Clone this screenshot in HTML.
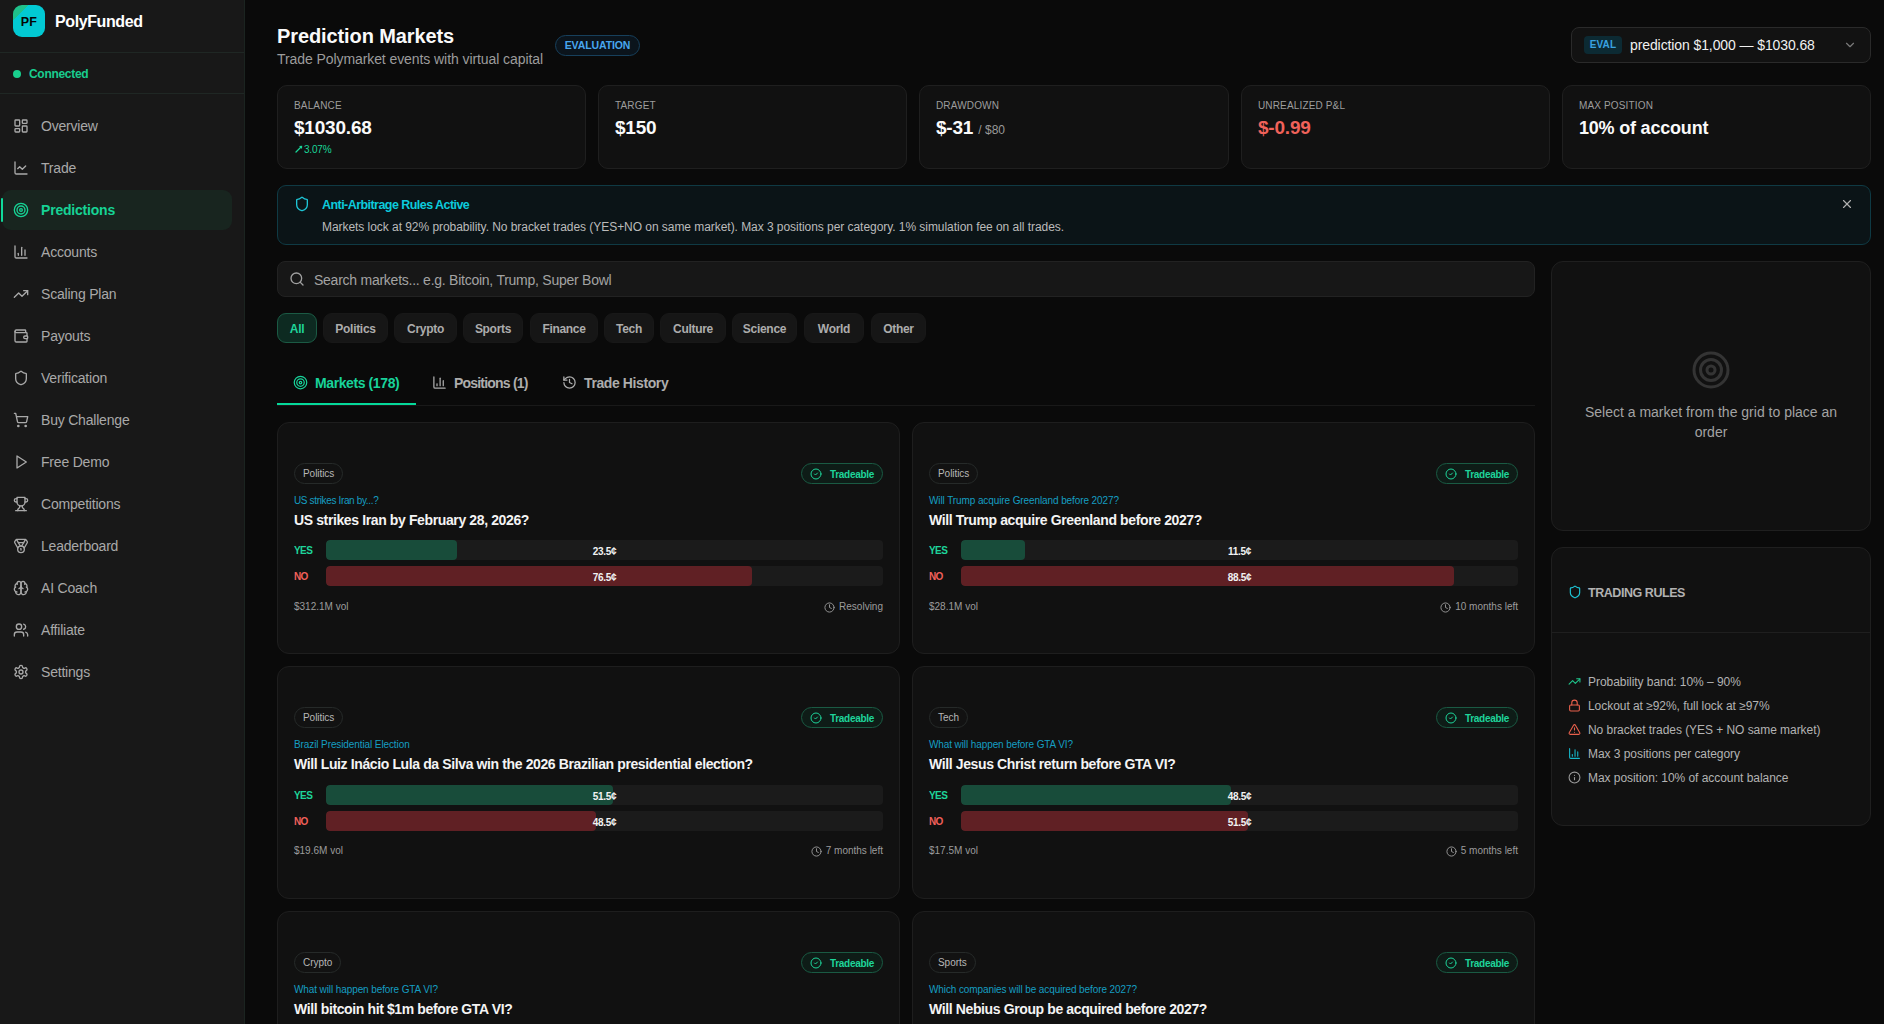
<!DOCTYPE html>
<html><head><meta charset="utf-8">
<style>
*{box-sizing:border-box;margin:0;padding:0}
html,body{width:1884px;height:1024px;overflow:hidden;background:#0a0a0a;font-family:"Liberation Sans",sans-serif;color:#e8e8e8}
.abs{position:absolute}
svg{display:block}
.ic{fill:none;stroke:currentColor;stroke-width:2;stroke-linecap:round;stroke-linejoin:round}
/* sidebar */
#sb{position:absolute;left:0;top:0;width:245px;height:1024px;background:#181818;border-right:1px solid #1b2420}
.logo{left:13px;top:5px;width:32px;height:32px;border-radius:9px;background:linear-gradient(135deg,#1fc08a 0,#1fc08a 24%,#02c9d3 24%,#02c9d3 100%);color:#050505;font-weight:bold;font-size:12.5px;line-height:34px;text-align:center;letter-spacing:0.2px}
.brand{left:55px;top:11px;font-size:16px;font-weight:bold;color:#fff;letter-spacing:-0.4px;line-height:22px}
.hr{left:0;width:244px;height:1px;background:#1f2724}
.nav{position:absolute;left:2px;width:230px;height:40px;color:#a9a9a9;font-size:14px;line-height:40px}
.nav svg{position:absolute;left:11px;top:12px;width:16px;height:16px}
.nav span{position:absolute;left:39px;top:0;letter-spacing:-0.2px}
.nav.act{background:#18251f;border-radius:9px;color:#16d395;font-weight:bold}
.nav.act:before{content:"";position:absolute;left:-1px;top:8px;width:2px;height:24px;background:#10d99a;border-radius:1px}

.card{position:absolute;background:#111111;border:1px solid #1f1f1f;border-radius:10px}
.lbl{position:absolute;font-size:10px;line-height:14px;color:#9d9d9d;letter-spacing:0.15px}
.val{position:absolute;font-size:19px;line-height:24px;font-weight:bold;color:#fafafa;letter-spacing:-0.2px}
.pill{position:absolute;top:313px;height:30px;border-radius:9px;background:#161616;color:#acacac;font-size:12px;font-weight:bold;line-height:30px;text-align:center;letter-spacing:-0.3px;border:1px solid #181818}
.tab{position:absolute;top:373px;height:20px;font-size:14px;line-height:20px;font-weight:bold;color:#adadad;letter-spacing:-0.4px}
.tab svg{position:absolute;left:0;top:2px;width:15px;height:15px}
.tab span{position:absolute;left:22px;top:0;white-space:nowrap}

.mc{position:absolute;width:623px;height:232px;background:#111111;border:1px solid #1e1e1e;border-radius:12px}
.mc .cat{position:absolute;left:16px;top:40px;height:21px;border-radius:11px;border:1px solid #262a29;background:#121212;color:#b7b7b7;font-size:10px;line-height:19px;padding:0 8px;letter-spacing:-0.05px}
.mc .trd{position:absolute;right:16px;top:40px;width:82px;height:21px;border-radius:11px;border:1px solid #1a5a43;background:#0e1c17;color:#1ed49a;font-size:10px;font-weight:bold;line-height:19px;letter-spacing:-0.3px}
.mc .trd svg{position:absolute;left:8px;top:4px;width:12px;height:12px}
.mc .trd span{position:absolute;left:28px;top:1px}
.mc .sub{position:absolute;left:16px;top:71px;font-size:10px;line-height:14px;color:#159ec2;letter-spacing:-0.1px;white-space:nowrap}
.mc .ttl{position:absolute;left:16px;top:87px;font-size:14px;line-height:20px;font-weight:bold;color:#f4f4f4;letter-spacing:-0.38px;white-space:nowrap}
.mc .yl{position:absolute;left:16px;font-size:10px;font-weight:bold;line-height:20px;letter-spacing:-0.6px}
.mc .tr{position:absolute;left:48px;width:557px;height:20px;border-radius:4px;background:#1b1b1b;overflow:hidden}
.mc .fl{position:absolute;left:0;top:0;height:20px;border-radius:4px}
.mc .pv{position:absolute;left:0;top:2px;width:557px;text-align:center;font-size:10px;font-weight:bold;line-height:20px;color:#f2f2f2;letter-spacing:-0.3px}
.mc .ft{position:absolute;top:177px;font-size:10px;line-height:14px;color:#9c9c9c;letter-spacing:0px;white-space:nowrap}
.mc .ft svg{position:absolute;left:0;top:2px;width:11px;height:11px}
.r2 .tr,.r2 .yl{margin-top:1px}
</style></head>
<body>
<div id="sb">
  <div class="abs logo">PF</div>
  <div class="abs brand">PolyFunded</div>
  <div class="abs hr" style="top:52px"></div>
  <div class="abs" style="left:13px;top:70px;width:8px;height:8px;border-radius:50%;background:#19cf8d"></div>
  <div class="abs" style="left:29px;top:66px;font-size:12px;font-weight:bold;color:#18cd8f;line-height:16px;letter-spacing:-0.3px">Connected</div>
  <div class="abs hr" style="top:93px"></div>

  <div class="nav" style="top:106px"><svg class="ic" viewBox="0 0 24 24"><rect width="7" height="9" x="3" y="3" rx="1"/><rect width="7" height="5" x="14" y="3" rx="1"/><rect width="7" height="9" x="14" y="12" rx="1"/><rect width="7" height="5" x="3" y="16" rx="1"/></svg><span>Overview</span></div>
  <div class="nav" style="top:148px"><svg class="ic" viewBox="0 0 24 24"><path d="M3 3v16a2 2 0 0 0 2 2h16"/><path d="m19 9-5 5-4-4-3 3"/></svg><span>Trade</span></div>
  <div class="nav act" style="top:190px"><svg class="ic" viewBox="0 0 24 24"><circle cx="12" cy="12" r="10"/><circle cx="12" cy="12" r="6"/><circle cx="12" cy="12" r="2"/></svg><span>Predictions</span></div>
  <div class="nav" style="top:232px"><svg class="ic" viewBox="0 0 24 24"><path d="M3 3v16a2 2 0 0 0 2 2h16"/><path d="M18 17V9"/><path d="M13 17V5"/><path d="M8 17v-3"/></svg><span>Accounts</span></div>
  <div class="nav" style="top:274px"><svg class="ic" viewBox="0 0 24 24"><polyline points="22 7 13.5 15.5 8.5 10.5 2 17"/><polyline points="16 7 22 7 22 13"/></svg><span>Scaling Plan</span></div>
  <div class="nav" style="top:316px"><svg class="ic" viewBox="0 0 24 24"><path d="M19 7V4a1 1 0 0 0-1-1H5a2 2 0 0 0 0 4h15a1 1 0 0 1 1 1v4h-3a2 2 0 0 0 0 4h3a1 1 0 0 0 1-1v-2a1 1 0 0 0-1-1"/><path d="M3 5v14a2 2 0 0 0 2 2h15a1 1 0 0 0 1-1v-4"/></svg><span>Payouts</span></div>
  <div class="nav" style="top:358px"><svg class="ic" viewBox="0 0 24 24"><path d="M20 13c0 5-3.500 7.500-7.660 8.950a1 1 0 0 1-.67-.01C7.500 20.500 4 18 4 13V6a1 1 0 0 1 1-1c2 0 4.500-1.200 6.240-2.720a1.170 1.170 0 0 1 1.520 0C14.510 3.810 17 5 19 5a1 1 0 0 1 1 1z"/></svg><span>Verification</span></div>
  <div class="nav" style="top:400px"><svg class="ic" viewBox="0 0 24 24"><circle cx="8" cy="21" r="1"/><circle cx="19" cy="21" r="1"/><path d="M2.050 2.050h2l2.660 12.420a2 2 0 0 0 2 1.580h9.780a2 2 0 0 0 1.950-1.570l1.650-7.430H5.120"/></svg><span>Buy Challenge</span></div>
  <div class="nav" style="top:442px"><svg class="ic" viewBox="0 0 24 24"><polygon points="6 3 20 12 6 21 6 3"/></svg><span>Free Demo</span></div>
  <div class="nav" style="top:484px"><svg class="ic" viewBox="0 0 24 24"><path d="M6 9H4.500a2.500 2.500 0 0 1 0-5H6"/><path d="M18 9h1.500a2.500 2.500 0 0 0 0-5H18"/><path d="M4 22h16"/><path d="M10 14.660V17c0 .550-.470.980-.970 1.210C7.850 18.750 7 20.240 7 22"/><path d="M14 14.660V17c0 .550.470.980.970 1.210C16.150 18.750 17 20.240 17 22"/><path d="M18 2H6v7a6 6 0 0 0 12 0V2Z"/></svg><span>Competitions</span></div>
  <div class="nav" style="top:526px"><svg class="ic" viewBox="0 0 24 24"><path d="M7.210 15 2.660 7.140a2 2 0 0 1 .130-2.200L4.400 2.800A2 2 0 0 1 6 2h12a2 2 0 0 1 1.600.800l1.600 2.140a2 2 0 0 1 .140 2.200L16.790 15"/><path d="M11 12 5.120 2.200"/><path d="m13 12 5.880-9.800"/><path d="M8 7h8"/><circle cx="12" cy="17" r="5"/><path d="M12 18v-2h-.5"/></svg><span>Leaderboard</span></div>
  <div class="nav" style="top:568px"><svg class="ic" viewBox="0 0 24 24"><path d="M12 5a3 3 0 1 0-5.997.125 4 4 0 0 0-2.526 5.770 4 4 0 0 0 .556 6.588A4 4 0 1 0 12 18Z"/><path d="M12 5a3 3 0 1 1 5.997.125 4 4 0 0 1 2.526 5.770 4 4 0 0 1-.556 6.588A4 4 0 1 1 12 18Z"/><path d="M15 13a4.500 4.500 0 0 1-3-4 4.500 4.500 0 0 1-3 4"/><path d="M17.599 6.500a3 3 0 0 0 .399-1.375"/><path d="M6.003 5.125A3 3 0 0 0 6.401 6.500"/><path d="M3.477 10.896a4 4 0 0 1 .585-.396"/><path d="M19.938 10.500a4 4 0 0 1 .585.396"/><path d="M6 18a4 4 0 0 1-1.967-.516"/><path d="M19.967 17.484A4 4 0 0 1 18 18"/></svg><span>AI Coach</span></div>
  <div class="nav" style="top:610px"><svg class="ic" viewBox="0 0 24 24"><path d="M16 21v-2a4 4 0 0 0-4-4H6a4 4 0 0 0-4 4v2"/><circle cx="9" cy="7" r="4"/><path d="M22 21v-2a4 4 0 0 0-3-3.870"/><path d="M16 3.130a4 4 0 0 1 0 7.750"/></svg><span>Affiliate</span></div>
  <div class="nav" style="top:652px"><svg class="ic" viewBox="0 0 24 24"><path d="M12.220 2h-.44a2 2 0 0 0-2 2v.180a2 2 0 0 1-1 1.730l-.43.250a2 2 0 0 1-2 0l-.15-.08a2 2 0 0 0-2.730.730l-.22.380a2 2 0 0 0 .730 2.730l.150.100a2 2 0 0 1 1 1.720v.510a2 2 0 0 1-1 1.740l-.15.090a2 2 0 0 0-.730 2.730l.220.380a2 2 0 0 0 2.730.730l.150-.080a2 2 0 0 1 2 0l.430.250a2 2 0 0 1 1 1.730V20a2 2 0 0 0 2 2h.440a2 2 0 0 0 2-2v-.180a2 2 0 0 1 1-1.730l.430-.250a2 2 0 0 1 2 0l.150.080a2 2 0 0 0 2.730-.730l.220-.390a2 2 0 0 0-.730-2.730l-.150-.080a2 2 0 0 1-1-1.740v-.500a2 2 0 0 1 1-1.740l.150-.090a2 2 0 0 0 .730-2.730l-.220-.380a2 2 0 0 0-2.730-.730l-.150.080a2 2 0 0 1-2 0l-.430-.250a2 2 0 0 1-1-1.730V4a2 2 0 0 0-2-2z"/><circle cx="12" cy="12" r="3"/></svg><span>Settings</span></div>
</div>

<div class="abs" style="left:277px;top:24px;font-size:20px;line-height:24px;font-weight:bold;color:#fafafa;letter-spacing:-0.1px">Prediction Markets</div>
<div class="abs" style="left:277px;top:49px;font-size:14px;line-height:20px;color:#9c9c9c;letter-spacing:-0.08px">Trade Polymarket events with virtual capital</div>
<div class="abs" style="left:555px;top:35px;width:85px;height:21px;border-radius:11px;border:1px solid #17405c;background:#0b141c;color:#48a6ee;font-size:10.5px;font-weight:bold;line-height:19px;text-align:center;letter-spacing:-0.1px">EVALUATION</div>

<div class="abs" style="left:1571px;top:27px;width:300px;height:36px;border-radius:8px;border:1px solid #2a2a2a;background:#121212"></div>
<div class="abs" style="left:1584px;top:36px;width:38px;height:18px;border-radius:4px;background:#0c2a33;color:#3aa3e0;font-size:10px;font-weight:bold;line-height:18px;text-align:center;letter-spacing:0.2px">EVAL</div>
<div class="abs" style="left:1630px;top:35px;font-size:14px;line-height:20px;color:#f0f0f0;letter-spacing:-0.1px;white-space:nowrap">prediction $1,000 — $1030.68</div>
<svg class="abs ic" style="left:1843px;top:38px;width:14px;height:14px;color:#7a7a7a" viewBox="0 0 24 24"><path d="m6 9 6 6 6-6"/></svg>

<div class="card" style="left:277px;top:85px;width:309px;height:84px"></div>
<div class="card" style="left:598px;top:85px;width:309px;height:84px"></div>
<div class="card" style="left:919px;top:85px;width:310px;height:84px"></div>
<div class="card" style="left:1241px;top:85px;width:309px;height:84px"></div>
<div class="card" style="left:1562px;top:85px;width:309px;height:84px"></div>
<div class="lbl" style="left:294px;top:99px">BALANCE</div>
<div class="val" style="left:294px;top:116px">$1030.68</div>
<svg class="abs" style="left:295px;top:144.5px;width:8px;height:8px" viewBox="0 0 8 8"><path d="M1 7 L6 2" stroke="#19d698" stroke-width="1.3" stroke-linecap="round"/><path d="M4 1 L7.2 0.8 L7 4 Z" fill="#19d698"/></svg>
<div class="abs" style="left:304px;top:143px;font-size:10px;line-height:13px;color:#19d698;letter-spacing:-0.2px">3.07%</div>
<div class="lbl" style="left:615px;top:99px">TARGET</div>
<div class="val" style="left:615px;top:116px">$150</div>
<div class="lbl" style="left:936px;top:99px">DRAWDOWN</div>
<div class="val" style="left:936px;top:116px">$-31 <span style="font-size:12px;font-weight:normal;color:#9a9a9a;letter-spacing:0">/ $80</span></div>
<div class="lbl" style="left:1258px;top:99px">UNREALIZED P&amp;L</div>
<div class="val" style="left:1258px;top:116px;color:#f0625a">$-0.99</div>
<div class="lbl" style="left:1579px;top:99px">MAX POSITION</div>
<div class="val" style="left:1579px;top:116px;font-size:18px">10% of account</div>

<div class="abs" style="left:277px;top:185px;width:1594px;height:60px;border-radius:9px;border:1px solid #0f3a44;background:#0b1417"></div>
<svg class="abs ic" style="left:294px;top:196px;width:16px;height:16px;color:#1ec5d6" viewBox="0 0 24 24"><path d="M20 13c0 5-3.500 7.500-7.660 8.950a1 1 0 0 1-.67-.01C7.500 20.500 4 18 4 13V6a1 1 0 0 1 1-1c2 0 4.500-1.200 6.240-2.720a1.170 1.170 0 0 1 1.520 0C14.510 3.810 17 5 19 5a1 1 0 0 1 1 1z"/></svg>
<div class="abs" style="left:322px;top:196px;font-size:12.5px;line-height:18px;font-weight:bold;color:#0ccbdc;letter-spacing:-0.55px;white-space:nowrap">Anti-Arbitrage Rules Active</div>
<div class="abs" style="left:322px;top:219px;font-size:12px;line-height:17px;color:#bbbbbb;letter-spacing:-0.05px;white-space:nowrap">Markets lock at 92% probability. No bracket trades (YES+NO on same market). Max 3 positions per category. 1% simulation fee on all trades.</div>
<svg class="abs ic" style="left:1840px;top:197px;width:14px;height:14px;color:#b0b0b0" viewBox="0 0 24 24"><path d="M18 6 6 18"/><path d="m6 6 12 12"/></svg>

<div class="abs" style="left:277px;top:261px;width:1258px;height:36px;border-radius:8px;border:1px solid #222222;background:#171717"></div>
<svg class="abs ic" style="left:289px;top:271px;width:16px;height:16px;color:#a0a0a0" viewBox="0 0 24 24"><circle cx="11" cy="11" r="8"/><path d="m21 21-4.300-4.300"/></svg>
<div class="abs" style="left:314px;top:270px;font-size:14px;line-height:20px;color:#a3a3a3;letter-spacing:-0.25px;white-space:nowrap">Search markets... e.g. Bitcoin, Trump, Super Bowl</div>

<div class="pill" style="left:277px;width:40px;background:#0d2a21;border-color:#1b5a44;color:#1fd49a">All</div>
<div class="pill" style="left:323px;width:65px">Politics</div>
<div class="pill" style="left:394px;width:63px">Crypto</div>
<div class="pill" style="left:463px;width:60px">Sports</div>
<div class="pill" style="left:530px;width:68px">Finance</div>
<div class="pill" style="left:604px;width:50px">Tech</div>
<div class="pill" style="left:660px;width:66px">Culture</div>
<div class="pill" style="left:732px;width:65px">Science</div>
<div class="pill" style="left:804px;width:60px">World</div>
<div class="pill" style="left:871px;width:55px">Other</div>

<div class="abs" style="left:277px;top:405px;width:1258px;height:1px;background:#191919"></div>
<div class="abs" style="left:277px;top:403px;width:139px;height:2px;background:#05d99a"></div>
<div class="tab" style="left:293px;color:#18d39a"><svg class="ic" viewBox="0 0 24 24"><circle cx="12" cy="12" r="10"/><circle cx="12" cy="12" r="6"/><circle cx="12" cy="12" r="2"/></svg><span>Markets (178)</span></div>
<div class="tab" style="left:432px"><svg class="ic" viewBox="0 0 24 24"><path d="M3 3v16a2 2 0 0 0 2 2h16"/><path d="M18 17V9"/><path d="M13 17V5"/><path d="M8 17v-3"/></svg><span style="letter-spacing:-0.8px">Positions (1)</span></div>
<div class="tab" style="left:562px"><svg class="ic" viewBox="0 0 24 24"><path d="M3 12a9 9 0 1 0 9-9 9.750 9.750 0 0 0-6.740 2.740L3 8"/><path d="M3 3v5h5"/><path d="M12 7v5l4 2"/></svg><span>Trade History</span></div>
<div class="mc" style="left:277px;top:422px"><div class="cat">Politics</div><div class="trd"><svg class="ic" viewBox="0 0 24 24"><circle cx="12" cy="12" r="10"/><path d="m9 12 2 2 4-4"/></svg><span>Tradeable</span></div><div class="sub" style="letter-spacing:-0.35px">US strikes Iran by...?</div><div class="ttl">US strikes Iran by February 28, 2026?</div><div class="yl" style="top:118px;color:#1ed49a">YES</div><div class="tr" style="top:117px"><div class="fl" style="width:130.9px;background:#184c3a"></div><div class="pv">23.5¢</div></div><div class="yl" style="top:144px;color:#f0605a">NO</div><div class="tr" style="top:143px"><div class="fl" style="width:426.1px;background:#602024"></div><div class="pv">76.5¢</div></div><div class="ft" style="left:16px">$312.1M vol</div><div class="ft" style="right:16px;padding-left:15px"><svg class="ic" viewBox="0 0 24 24"><circle cx="12" cy="12" r="10"/><polyline points="12 6 12 12 16 14"/></svg>Resolving</div></div>
<div class="mc" style="left:912px;top:422px"><div class="cat">Politics</div><div class="trd"><svg class="ic" viewBox="0 0 24 24"><circle cx="12" cy="12" r="10"/><path d="m9 12 2 2 4-4"/></svg><span>Tradeable</span></div><div class="sub">Will Trump acquire Greenland before 2027?</div><div class="ttl">Will Trump acquire Greenland before 2027?</div><div class="yl" style="top:118px;color:#1ed49a">YES</div><div class="tr" style="top:117px"><div class="fl" style="width:64.1px;background:#184c3a"></div><div class="pv">11.5¢</div></div><div class="yl" style="top:144px;color:#f0605a">NO</div><div class="tr" style="top:143px"><div class="fl" style="width:492.9px;background:#602024"></div><div class="pv">88.5¢</div></div><div class="ft" style="left:16px">$28.1M vol</div><div class="ft" style="right:16px;padding-left:15px"><svg class="ic" viewBox="0 0 24 24"><circle cx="12" cy="12" r="10"/><polyline points="12 6 12 12 16 14"/></svg>10 months left</div></div>
<div class="mc r2" style="left:277px;top:666px;height:233px"><div class="cat">Politics</div><div class="trd"><svg class="ic" viewBox="0 0 24 24"><circle cx="12" cy="12" r="10"/><path d="m9 12 2 2 4-4"/></svg><span>Tradeable</span></div><div class="sub">Brazil Presidential Election</div><div class="ttl">Will Luiz Inácio Lula da Silva win the 2026 Brazilian presidential election?</div><div class="yl" style="top:118px;color:#1ed49a">YES</div><div class="tr" style="top:117px"><div class="fl" style="width:286.9px;background:#184c3a"></div><div class="pv">51.5¢</div></div><div class="yl" style="top:144px;color:#f0605a">NO</div><div class="tr" style="top:143px"><div class="fl" style="width:270.1px;background:#602024"></div><div class="pv">48.5¢</div></div><div class="ft" style="left:16px">$19.6M vol</div><div class="ft" style="right:16px;padding-left:15px"><svg class="ic" viewBox="0 0 24 24"><circle cx="12" cy="12" r="10"/><polyline points="12 6 12 12 16 14"/></svg>7 months left</div></div>
<div class="mc r2" style="left:912px;top:666px;height:233px"><div class="cat">Tech</div><div class="trd"><svg class="ic" viewBox="0 0 24 24"><circle cx="12" cy="12" r="10"/><path d="m9 12 2 2 4-4"/></svg><span>Tradeable</span></div><div class="sub">What will happen before GTA VI?</div><div class="ttl">Will Jesus Christ return before GTA VI?</div><div class="yl" style="top:118px;color:#1ed49a">YES</div><div class="tr" style="top:117px"><div class="fl" style="width:270.1px;background:#184c3a"></div><div class="pv">48.5¢</div></div><div class="yl" style="top:144px;color:#f0605a">NO</div><div class="tr" style="top:143px"><div class="fl" style="width:286.9px;background:#602024"></div><div class="pv">51.5¢</div></div><div class="ft" style="left:16px">$17.5M vol</div><div class="ft" style="right:16px;padding-left:15px"><svg class="ic" viewBox="0 0 24 24"><circle cx="12" cy="12" r="10"/><polyline points="12 6 12 12 16 14"/></svg>5 months left</div></div>
<div class="mc" style="left:277px;top:911px"><div class="cat">Crypto</div><div class="trd"><svg class="ic" viewBox="0 0 24 24"><circle cx="12" cy="12" r="10"/><path d="m9 12 2 2 4-4"/></svg><span>Tradeable</span></div><div class="sub">What will happen before GTA VI?</div><div class="ttl">Will bitcoin hit $1m before GTA VI?</div></div>
<div class="mc" style="left:912px;top:911px"><div class="cat">Sports</div><div class="trd"><svg class="ic" viewBox="0 0 24 24"><circle cx="12" cy="12" r="10"/><path d="m9 12 2 2 4-4"/></svg><span>Tradeable</span></div><div class="sub">Which companies will be acquired before 2027?</div><div class="ttl">Will Nebius Group be acquired before 2027?</div></div>
<div class="card" style="left:1551px;top:261px;width:320px;height:270px;border-radius:12px"></div>
<svg class="abs" style="left:1691px;top:350px;width:40px;height:40px" viewBox="0 0 40 40" fill="none" stroke="#343434" stroke-width="3"><circle cx="20" cy="20" r="17"/><circle cx="20" cy="20" r="10.5"/><circle cx="20" cy="20" r="4"/></svg>
<div class="abs" style="left:1551px;top:402px;width:320px;text-align:center;font-size:14px;line-height:20px;color:#a3a3a3">Select a market from the grid to place an<br>order</div>

<div class="card" style="left:1551px;top:547px;width:320px;height:279px;border-radius:12px"></div>
<svg class="abs ic" style="left:1568px;top:585px;width:14px;height:14px;color:#1ec5d6" viewBox="0 0 24 24"><path d="M20 13c0 5-3.500 7.500-7.660 8.950a1 1 0 0 1-.67-.01C7.500 20.500 4 18 4 13V6a1 1 0 0 1 1-1c2 0 4.500-1.200 6.240-2.720a1.170 1.170 0 0 1 1.520 0C14.510 3.810 17 5 19 5a1 1 0 0 1 1 1z"/></svg>
<div class="abs" style="left:1588px;top:584px;font-size:12.5px;line-height:18px;font-weight:bold;color:#b2b2b2;letter-spacing:-0.45px">TRADING RULES</div>
<div class="abs" style="left:1552px;top:632px;width:318px;height:1px;background:#1f1f1f"></div>
<div class="abs rules" style="left:1588px;top:670px;font-size:12px;line-height:24px;color:#b3b3b3;letter-spacing:-0.05px;white-space:nowrap">Probability band: 10% – 90%<br>Lockout at ≥92%, full lock at ≥97%<br>No bracket trades (YES + NO same market)<br>Max 3 positions per category<br>Max position: 10% of account balance</div>
<svg class="abs ic" style="left:1568px;top:675px;width:13px;height:13px;color:#1fc58b" viewBox="0 0 24 24"><polyline points="22 7 13.500 15.500 8.500 10.500 2 17"/><polyline points="16 7 22 7 22 13"/></svg>
<svg class="abs ic" style="left:1568px;top:699px;width:13px;height:13px;color:#e8604c" viewBox="0 0 24 24"><rect width="18" height="11" x="3" y="11" rx="2" ry="2"/><path d="M7 11V7a5 5 0 0 1 10 0v4"/></svg>
<svg class="abs ic" style="left:1568px;top:723px;width:13px;height:13px;color:#e8604c" viewBox="0 0 24 24"><path d="m21.730 18-8-14a2 2 0 0 0-3.480 0l-8 14A2 2 0 0 0 4 21h16a2 2 0 0 0 1.730-3"/><path d="M12 9v4"/><path d="M12 17h.01"/></svg>
<svg class="abs ic" style="left:1568px;top:747px;width:13px;height:13px;color:#16b9cc" viewBox="0 0 24 24"><path d="M3 3v16a2 2 0 0 0 2 2h16"/><path d="M18 17V9"/><path d="M13 17V5"/><path d="M8 17v-3"/></svg>
<svg class="abs ic" style="left:1568px;top:771px;width:13px;height:13px;color:#9a9a9a" viewBox="0 0 24 24"><circle cx="12" cy="12" r="10"/><path d="M12 16v-4"/><path d="M12 8h.01"/></svg>


</body></html>
